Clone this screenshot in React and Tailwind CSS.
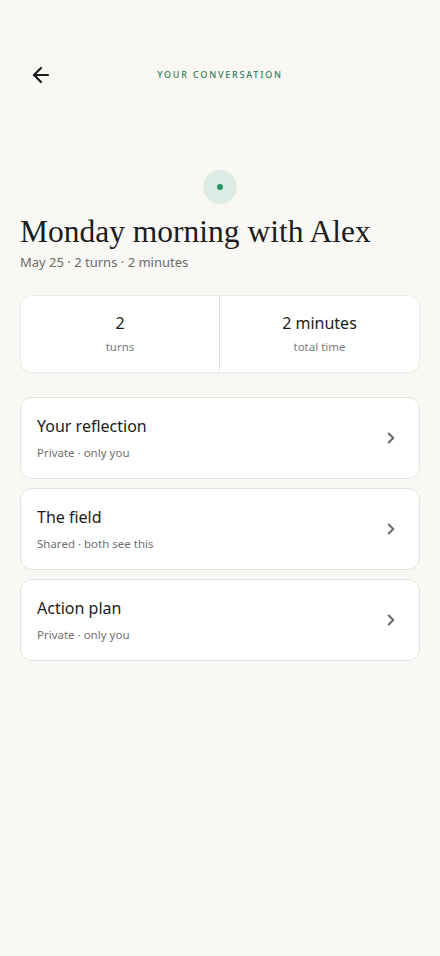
import { ChevronRight, ArrowLeft } from 'lucide-react';

const sections = [
  { title: "Your reflection", sub: "Private · only you" },
  { title: "The field", sub: "Shared · both see this" },
  { title: "Action plan", sub: "Private · only you" },
];

export default function App() {
  return (
    <div className="min-h-[956px] w-full bg-[#f9f8f5] text-[#1c1c1c]" style={{ fontFamily: "'Noto Sans', sans-serif" }}>
      <div className="grid grid-cols-[60px_1fr_60px] items-center pt-[60px]">
        <button className="flex h-[30px] items-center pl-[29px] text-[#1c1c1c]">
          <ArrowLeft size={24} strokeWidth={2.2} />
        </button>
        <div className="text-center text-[9px] font-medium tracking-[0.2em] text-[#2f7d5c]">YOUR CONVERSATION</div>
        <div />
      </div>

      <div className="flex justify-center pt-[80px]">
        <div className="flex h-[34px] w-[34px] items-center justify-center rounded-full bg-[#dcece4]">
          <div className="h-[6px] w-[6px] rounded-full bg-[#24976a]" />
        </div>
      </div>

      <div className="px-5 pt-[8px]">
        <h1 className="text-[31.5px] leading-[40px] text-[#1c1c1c]" style={{ fontFamily: "'Liberation Serif', serif" }}>
          Monday morning with Alex
        </h1>
        <p className="mt-[1px] text-[13px] text-[#6b6b6b]">May 25 · 2 turns · 2 minutes</p>

        <div className="mt-[22px] grid grid-cols-2 rounded-xl border border-[#ecebe7] bg-white shadow-[0_1px_2px_rgba(0,0,0,0.03)]">
          <div className="flex h-[76px] flex-col items-center justify-center border-r border-[#e4e3df]">
            <div className="text-[16px] leading-6">2</div>
            <div className="mt-[3px] text-[11.5px] text-[#7a7a7a]">turns</div>
          </div>
          <div className="flex h-[76px] flex-col items-center justify-center">
            <div className="text-[16px] leading-6">2 minutes</div>
            <div className="mt-[3px] text-[11.5px] text-[#7a7a7a]">total time</div>
          </div>
        </div>

        <div className="mt-[24px] flex flex-col gap-[9px]">
          {sections.map((s) => (
            <div key={s.title} className="flex h-[82px] items-center justify-between rounded-xl border border-[#e4e3df] bg-white pl-4 pr-[19px]">
              <div>
                <div className="text-[16px] leading-6">{s.title}</div>
                <div className="mt-[6px] text-[11.5px] text-[#6f6f6f]">{s.sub}</div>
              </div>
              <ChevronRight size={18} strokeWidth={2.8} className="text-[#6b6b6b]" />
            </div>
          ))}
        </div>
      </div>
    </div>
  );
}
